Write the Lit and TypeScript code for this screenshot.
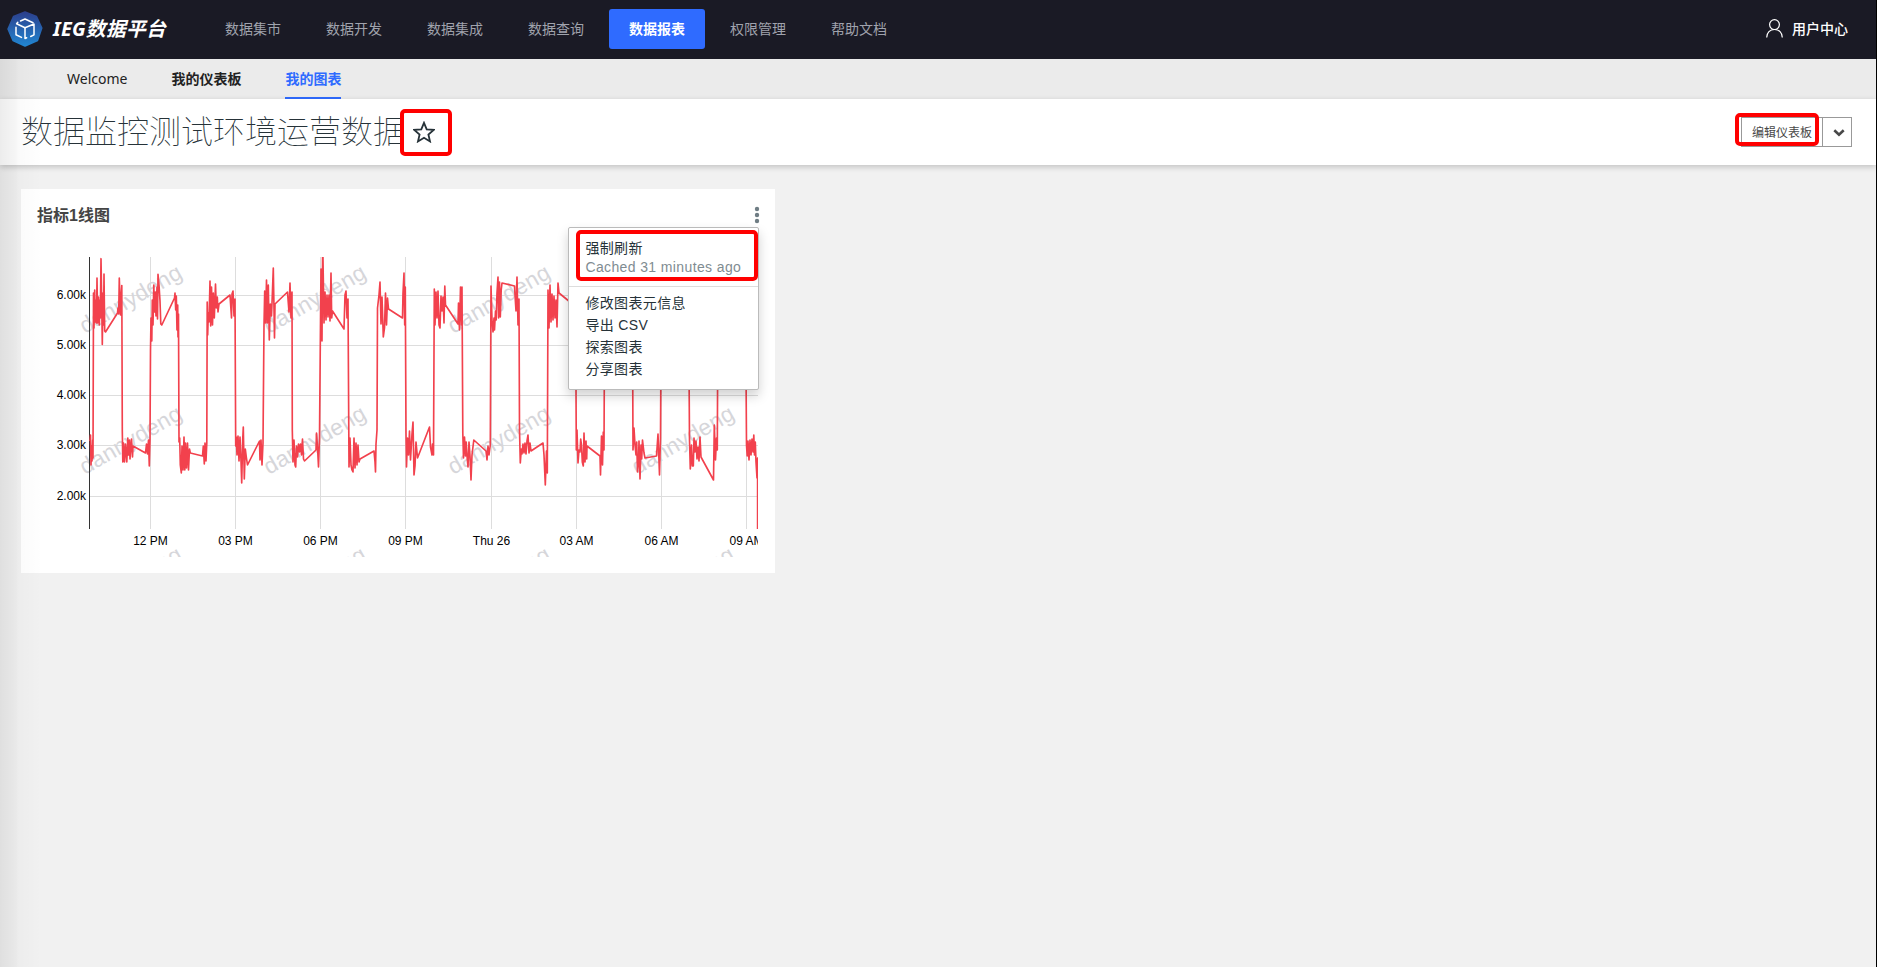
import { LitElement, html, svg, css } from "lit";
import { customElement } from "lit/decorators.js";

const NAV = ["数据集市", "数据开发", "数据集成", "数据查询", "数据报表", "权限管理", "帮助文档"];
const ACTIVE_NAV = "数据报表";

const X_TICKS: [number, string][] = [
  [150.5, "12 PM"], [235.5, "03 PM"], [320.5, "06 PM"], [405.5, "09 PM"], [491.5, "Thu 26"],
  [576.5, "03 AM"], [661.5, "06 AM"], [746.5, "09 AM"],
];
const Y_TICKS: [number, string][] = [
  [295.5, "6.00k"], [345.5, "5.00k"], [395.5, "4.00k"], [445.5, "3.00k"], [496.5, "2.00k"],
];

// One row per plateau of the series, alternating low and high.
const SERIES = `
90,441 90.5,435 91,465 91.5,446 92,461 92.7,440 93,458
93.5,293 94,328 94.7,290 95.3,322 96,300 96.5,323 97,278 97.7,323 98.5,297 99.3,325 100,300 100.3,318 101,258.7 101.7,300 102.3,344.5 103,293 103.5,325 104,274 104.7,331 105.5,332 117.5,313 118,308 118.7,314 119.3,278 120,300 120.5,315 121,300 121.8,285.5
122.3,431 122.8,462 123.5,443 124.5,462 125.5,444 126.8,462 127.8,438 128.5,455 129.5,440 130,459 131.5,439 132.5,457 133,446 145.5,453 146.5,444 147.5,454 148.5,440 149.3,466 150,440
150.5,350 151,318 151.8,341 152.3,300 153,325 153.8,285 154.5,312 155.3,292 156,316 157,287 157.5,319 158,274.3 159,285 160,301 160.8,324 161.8,325 174.5,298 175,293 175.7,310 176.3,296 177,330 177.7,305 178,337 178.5,314
179,442 179.7,438 180.3,465 181.3,473 182,446 183,470 184,437 184.8,470 185.5,443 186.5,468 187.5,443 188.5,470 189.5,449 190.3,453 202.5,456 203.3,446 204.3,464 205,443 206,461 206.8,443
207.2,302 207.7,335 208.3,313 209,322 210,281 210.7,326 211.5,287 212.5,325 213.3,293 214.3,318 215.5,284 216.3,308 217.3,297 218,312 219,304 230,295 231.5,318 232,294 233,291 234,316 235,299
235.7,446 236.3,437 237,455 238,436 239,461 240,437 241,461 241.7,483 242.7,440 243.3,427 244.3,479 245.3,449 246.3,457 247.5,465 259.5,441 260,460 261,440 262,465 263,443
264,325 264.7,291 265.5,323 266.5,280 267.3,323 268.3,285 269.3,340 270.3,304 271.5,316 272.5,290 273.3,268 274.5,338 275,304 287.5,292 288.3,303 289,312 290,283 291,318 292,292
292.3,430 293,462 294,440 295,465 295.7,467 296.5,446 297.5,457 298.5,444 299.5,452 300.5,444 301.5,455 302.5,439 303.5,459 304.5,461 316,450 316.5,433 317.5,447 318.5,467 319.5,438
320.6,310 321,269 322,341 322.7,240 324,323 325,292 326,320 327,295 328,317 329,295 330,321 331,273 331.7,318 332.5,311 344,329 345,295 346,291 347,318 348,299
349,467 350,438 351,465 352,470 353,472 354,438 355,468 356,443 357,465 358,445 359,462 360,459 374,451 375,462 375.5,472 376,444 377,430
377.5,308 379,295 380,282 381,324 382,297 383.3,337 384.5,328 385.5,293 386.5,325 387.5,298 388.5,309 402.5,318 403,293 404,273 404.7,325 405.3,287
406,433 406.5,467 407.5,438 408.5,455 409.5,431 410.5,460 412,434 413,422 414,475 415,466 416,442 417.5,458 429.5,427 430.5,447 432,455 432.5,444 433.5,455
434.3,289 435,325 436,292 437,318 438,291 439,325 440,328 441,296 442,311 443,297 444,323 444.8,286 445.5,305 458,324 458.5,303 459.5,330 460.5,287 461.5,325 462,287
462.8,433 463.5,458 464.5,437 465.5,456 466.2,442 467,456 468,467 469,442 470,456 471,480 472,455 473.8,440 486,451 487,460 488,446 489,455 490.3,445
491,286 492,320 493,332 494,318 494.5,330 495.5,311 496.2,320 497,293 498,277 498.6,318 499.5,282 500.3,317 501.2,290 502,283 514.5,286 515,295 516,311 517,277 518,325 519,299
519.5,430 520.3,463 521.3,449 522,454 523,444 524,453 525,443 526,454 527,441 528,435 529,453 530,443 531,451 543,443 544,455 545.3,485 546.5,451 547.3,473
548,290 549,328 550,285 551,322 552,294 553,320 554,296 555,318 556,300 557,327 558,283 559,293 570,302 572,285 574,318 575.5,290
576.3,450 577,430 578,463 579,450 580,452 580.7,439 581.5,445 582.3,462 583.3,466 584,433 585,462 586,441 586.7,459 587,446 600,456 600.5,475 601.5,436 602.5,465 603.3,432 604,450
604.7,290 606,320 608,285 612,325 616,300 628,310 631,290 632.5,320
633,450 634,428 635,445 636,455 636.7,442 637.5,472 638.5,462 639,441 640,479 641,445 641.7,459 642.5,440 644,453 645,458 656.5,456 658,434 659.5,475 660.5,438
661.3,300 664,325 668,285 672,318 686,300 688.5,290
689.5,440 690.3,469 691.5,445 692.3,466 693.3,466 694,438 695,452 696,441 697,459 698,447 699,461 700,437 701,457 713.5,480 714.3,425 715.5,460 716.5,438 717.3,450
718,290 721,325 725,290 729,318 742,300 745.5,290
746.5,445 747.2,456 748,441 749,460 750,440 751,455 752,439 753,452 753.8,435 754.5,455 755.3,442 756,462 757,478 757.6,458 757.6,530`;

@customElement("line-chart")
export class LineChart extends LitElement {
  static styles = css`
    :host { display: block; }
    svg { display: block; }
    text { font-family: "Liberation Sans", Arial, sans-serif; font-size: 12px; fill: #000; }
    .grid { stroke: #ddd; stroke-width: 1; }
    .axis { stroke: #333; stroke-width: 1; }
    .series { fill: none; stroke: #f2414d; stroke-width: 1.65; stroke-linejoin: round; }
    .mark { font-size: 22.6px; fill: #d6d6da; letter-spacing: 0.25px; }
  `;

  render() {
    const marks: [number, number][] = [];
    for (let row = 0; row < 3; row++) {
      for (let col = 0; col < 4; col++) marks.push([85 + col * 184.1, 334 + row * 141]);
    }
    return html`<svg width="721" height="317" viewBox="37 240 721 317">
      <defs><clipPath id="plot"><rect x="89" y="257" width="669" height="272"></rect></clipPath></defs>
      ${Y_TICKS.map(([y]) => svg`<line class="grid" x1="90" x2="758" y1=${y} y2=${y}></line>`)}
      ${X_TICKS.map(([x]) => svg`<line class="grid" x1=${x} x2=${x} y1="257" y2="529"></line>`)}
      ${marks.map(([x, y]) => svg`<text class="mark" transform="translate(${x} ${y}) rotate(-30)">dannydeng</text>`)}
      <line class="axis" x1="89.5" x2="89.5" y1="257" y2="529"></line>
      <polyline class="series" clip-path="url(#plot)" points=${SERIES.trim()}></polyline>
      ${Y_TICKS.map(([y, t]) => svg`<text x="86" y=${y + 3.5} text-anchor="end">${t}</text>`)}
      ${X_TICKS.map(([x, t]) => svg`<text x=${x} y="545" text-anchor="middle">${t}</text>`)}
    </svg>`;
  }
}

@customElement("app-root")
export class AppRoot extends LitElement {
  static styles = css`
    :host {
      display: block; position: relative; box-sizing: border-box; height: 967px; overflow: hidden;
      background: #f1f1f1; border-right: 1px solid #000;
      font-family: "Noto Sans", "Noto Sans CJK SC", sans-serif; font-size: 14px; color: #263238;
    }
    * { box-sizing: border-box; }
    .top { display: flex; align-items: center; height: 59px; padding: 0 28px 2px 7px; background: #1a1a25; }
    .logo { display: block; width: 36px; height: 36px; }
    .brand {
      width: 152px; margin-left: 10px; color: #fff; white-space: nowrap; letter-spacing: 0.3px;
      font: italic 700 19.8px/28px "Noto Sans", "Noto Sans CJK SC", sans-serif;
    }
    .nav { display: flex; gap: 5px; }
    .item {
      width: 96px; height: 40px; line-height: 39px; text-align: center; color: #a0a3ad; border-radius: 3px;
      margin-top: 1px; font-family: "Noto Sans CJK SC", sans-serif;
    }
    .item.active { background: #2f6bff; color: #fff; font-weight: 700; }
    .user {
      display: flex; align-items: center; gap: 9px; margin: -1px 0 0 auto; color: #fff; font-weight: 500;
      font-family: "Noto Sans CJK SC", sans-serif; line-height: 20px;
    }
    .user svg { display: block; margin-top: 1px; }
    .tabs { display: flex; gap: 44px; height: 40px; padding-left: 67px; background: #ebebeb; color: #222; line-height: 39px; }
    .tab { height: 40px; }
    .tab.cjk { font-family: "Noto Sans CJK SC", sans-serif; font-weight: 700; }
    .tab.active { color: #2f6bff; border-bottom: 2px solid #2f6bff; }
    .head {
      display: flex; align-items: center; height: 66px; padding: 0 24px 0 21px; background: #fff;
      position: relative; box-shadow: 0 2px 6px rgba(0, 0, 0, 0.2);
    }
    .title { margin: -7px 0 0; width: 379px; white-space: nowrap; font: 100 32px/48px "Noto Sans CJK SC", sans-serif; }
    .ring { border: 4px solid #f00; border-radius: 5px; }
    .fav { position: relative; display: flex; align-items: center; width: 52px; height: 47px; padding-left: 9px; background: #fff; }
    .actions { position: relative; display: flex; margin-left: auto; height: 30px; }
    .edit {
      width: 82px; border: 1px solid #999; line-height: 27px; padding-left: 10px; font-size: 12px; color: #484848;
      font-family: "Noto Sans CJK SC", sans-serif; white-space: nowrap;
    }
    .caret { width: 30px; margin-left: -1px; padding: 1px 0 0 3px; border: 1px solid #999; display: flex; align-items: center; justify-content: center; }
    .edit-ring { position: absolute; left: -6px; top: -4px; width: 84px; height: 33px; }
    .board { padding: 24px 21px; }
    .card { position: relative; width: 754px; height: 384px; background: #fff; padding: 16px; }
    .card-head { display: flex; justify-content: space-between; height: 35px; }
    .name { font: 700 16px/22px "Liberation Sans", "Noto Sans CJK SC", sans-serif; color: #444; }
    .dots { display: block; margin: 1px 0 0; }
    .menu {
      position: absolute; left: 547px; top: 38px; width: 191px; height: 163px; background: #fff;
      border: 1px solid #bbb; border-radius: 2px; box-shadow: 0 6px 12px rgba(0, 0, 0, 0.18);
      font: 14px/22px "Liberation Sans", "Noto Sans CJK SC", sans-serif; letter-spacing: 0.35px;
    }
    .refresh { height: 59px; padding: 10px 0 0 16.4px; border-bottom: 1px solid #ddd; line-height: 20px; }
    .cached { color: #7f8c92; line-height: 18px; letter-spacing: 0.38px; }
    .options { padding: 5px 0 0 16.4px; }
    .refresh-ring { position: absolute; left: 7px; top: 2px; width: 182px; height: 51px; }
    .shade {
      position: absolute; left: 0; top: 59px; width: 42px; height: 908px; pointer-events: none;
      background: linear-gradient(90deg, rgba(0, 0, 0, 0.075), rgba(0, 0, 0, 0.035) 16px, rgba(0, 0, 0, 0.018) 18px, transparent 42px);
    }
  `;

  render() {
    return html`
      <header class="top">
        <svg class="logo" viewBox="0 0 36 36">
          <defs><linearGradient id="lg" x1="0" y1="0" x2="0" y2="1">
            <stop offset="0" stop-color="#2c3f8c"></stop><stop offset="1" stop-color="#2186d2"></stop>
          </linearGradient></defs>
          <path fill="url(#lg)" stroke="url(#lg)" stroke-width="1.5" stroke-linejoin="round" d="M18 1 29.5 5.5 34.8 17 30.5 29.5 18 35 6 29.5 1 18 6.5 5.5Z"></path>
          <g fill="none" stroke="#fff" stroke-width="1.5" stroke-linejoin="round" stroke-linecap="round">
            <path d="M13.5 10 18 8 26 11.7"></path>
            <path d="M10.8 11.3 9.6 12.8 18 16.7 27 13v10.8L23.7 25.5"></path>
            <path d="M9 16.3v7.5l5.5 2.6"></path><path d="M18 16.7v10.8l1.7-.7"></path>
          </g>
        </svg>
        <div class="brand">IEG数据平台</div>
        <nav class="nav">${NAV.map((n) => html`<div class="item ${n === ACTIVE_NAV ? "active" : ""}">${n}</div>`)}</nav>
        <div class="user">
          <svg width="17" height="19" viewBox="0 0 17 19" fill="none" stroke="#fff" stroke-width="1.2">
            <circle cx="8.5" cy="5.6" r="4.9"></circle><path d="M.7 18.6C.7 13.6 4 10.5 8.5 10.5s7.8 3.1 7.8 8.1"></path>
          </svg>
          <span>用户中心</span>
        </div>
      </header>
      <div class="tabs">
        <div class="tab">Welcome</div><div class="tab cjk">我的仪表板</div><div class="tab cjk active">我的图表</div>
      </div>
      <section class="head">
        <h1 class="title">数据监控测试环境运营数据</h1>
        <div class="fav ring">
          <svg width="22" height="22" viewBox="0 0 22 22" fill="none" stroke="#263238" stroke-width="1.8">
            <path d="M11 1.8 13.7 8.3 20.7 8.9 15.4 13.5 17 20.4 11 16.7 5 20.4 6.6 13.5 1.3 8.9 8.3 8.3Z"></path>
          </svg>
        </div>
        <div class="actions">
          <div class="edit">编辑仪表板</div>
          <div class="caret">
            <svg width="12" height="8" viewBox="0 0 12 8" fill="none" stroke="#484848" stroke-width="2.6"><path d="M1.3 1.2 6 5.7 10.7 1.2"></path></svg>
          </div>
          <div class="edit-ring ring"></div>
        </div>
      </section>
      <main class="board">
        <article class="card">
          <div class="card-head">
            <div class="name">指标1线图</div>
            <svg class="dots" width="4" height="18" viewBox="0 0 4 18" overflow="visible" fill="#6f7d84">
              <circle cx="2" cy="3" r="2.2"></circle><circle cx="2" cy="9" r="2.2"></circle><circle cx="2" cy="15" r="2.2"></circle>
            </svg>
          </div>
          <line-chart></line-chart>
          <div class="menu">
            <div class="refresh"><div>强制刷新</div><div class="cached">Cached 31 minutes ago</div></div>
            <div class="options"><div>修改图表元信息</div><div>导出 CSV</div><div>探索图表</div><div>分享图表</div></div>
            <div class="refresh-ring ring"></div>
          </div>
        </article>
      </main>
      <div class="shade"></div>
    `;
  }
}
